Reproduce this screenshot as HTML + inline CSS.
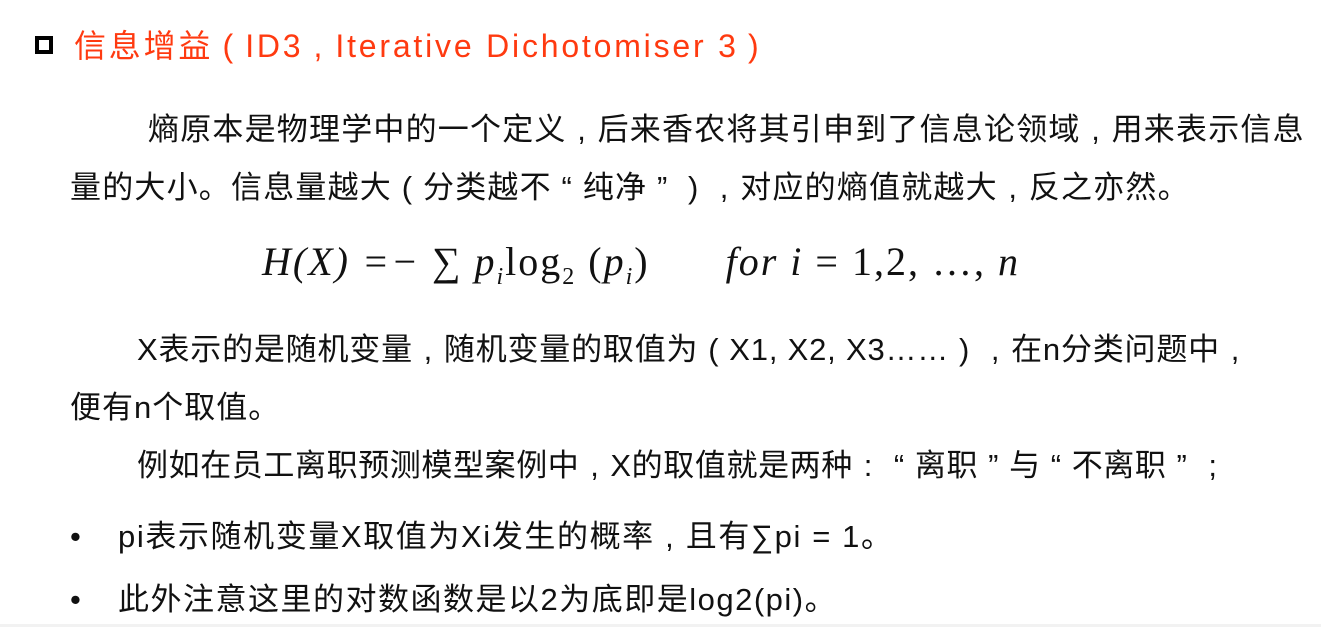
<!DOCTYPE html>
<html><head><meta charset="utf-8"><style>
body{margin:0;width:1321px;height:627px;background:#fff;position:relative;overflow:hidden;font-family:"Liberation Sans","Noto Sans CJK SC",sans-serif;color:#111}
.l{position:absolute;white-space:nowrap;font-size:31px;line-height:40px}
.m{font-family:"Liberation Serif","DejaVu Serif",serif;font-style:italic;font-size:40px}
.p{display:inline-block;width:1em;text-align:center}
</style></head><body>
<div style="position:absolute;left:35px;top:36px;width:10px;height:10px;border:4px solid #000"></div>
<div class="l" style="left:74px;top:26px;color:#ff3a10;font-size:32px;letter-spacing:2.8px">信息增益<span class="p">(</span>ID3<span class="p">,</span>Iterative Dichotomiser 3<span class="p">)</span></div>
<div class="l" style="left:148px;top:110px;letter-spacing:1.2px">熵原本是物理学中的一个定义<span class="p">,</span>后来香农将其引申到了信息论领域<span class="p">,</span>用来表示信息</div>
<div class="l" style="left:70px;top:168px;letter-spacing:1.2px">量的大小。信息量越大<span class="p">(</span>分类越不<span class="p">“</span>纯净<span class="p">”</span><span class="p">)</span><span class="p">,</span>对应的熵值就越大<span class="p">,</span>反之亦然。</div>
<div class="l m" style="left:262px;top:238px;line-height:48px;letter-spacing:2px">H(X) =− <span style="font-style:normal">∑</span> p<sub style="font-size:24px">i</sub><span style="font-style:normal">log<sub style="font-size:24px">2</sub> (</span>p<sub style="font-size:24px">i</sub><span style="font-style:normal">)</span><span style="display:inline-block;width:76px"></span>for i <span style="font-style:normal">= 1,2, …,</span> n</div>
<div class="l" style="left:137px;top:330px;letter-spacing:0.8px">X表示的是随机变量<span class="p">,</span>随机变量的取值为<span class="p">(</span>X1, X2, X3……<span class="p">)</span><span class="p">,</span>在n分类问题中<span class="p">,</span></div>
<div class="l" style="left:70px;top:388px;letter-spacing:1px">便有n个取值。</div>
<div class="l" style="left:137px;top:446px;letter-spacing:0.6px">例如在员工离职预测模型案例中<span class="p">,</span>X的取值就是两种<span class="p">:</span><span class="p">“</span>离职<span class="p">”</span>与<span class="p">“</span>不离职<span class="p">”</span><span class="p">;</span></div>
<div class="l" style="left:70px;top:517px">•</div>
<div class="l" style="left:118px;top:517px;letter-spacing:1.6px">pi表示随机变量X取值为Xi发生的概率<span class="p">,</span>且有∑pi = 1。</div>
<div class="l" style="left:70px;top:580px">•</div>
<div class="l" style="left:118px;top:580px;letter-spacing:1.5px">此外注意这里的对数函数是以2为底即是log2(pi)。</div>
<div style="position:absolute;left:0;top:624px;width:1321px;height:3px;background:#f2f2f2"></div>
</body></html>
